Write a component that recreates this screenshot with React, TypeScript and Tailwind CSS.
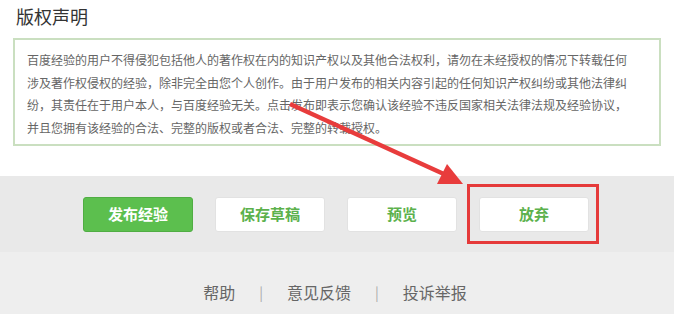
import React from 'react';

const font = { fontFamily: '"Microsoft YaHei", "Noto Sans CJK SC", "Noto Sans", sans-serif' };

export default function App() {
  return (
    <div className="relative w-[674px] h-[314px] overflow-hidden bg-[#eeeeee]" style={font}>
      {/* White section */}
      <div className="bg-white h-[176px] px-[13px] pt-[3px]">
        <h2 className="text-[18px] leading-[26px] text-[#333] pl-[3px] mb-[9px]">版权声明</h2>
        <div className="border-2 border-[#cadfc0] pl-[12px] pr-[26px] pt-[9px] pb-[5px] text-[12px] leading-[22.5px] text-[#666]">
          百度经验的用户不得侵犯包括他人的著作权在内的知识产权以及其他合法权利，请勿在未经授权的情况下转载任何涉及著作权侵权的经验，除非完全由您个人创作。由于用户发布的相关内容引起的任何知识产权纠纷或其他法律纠纷，其责任在于用户本人，与百度经验无关。点击发布即表示您确认该经验不违反国家相关法律法规及经验协议，并且您拥有该经验的合法、完整的版权或者合法、完整的转载授权。
        </div>
      </div>

      {/* Button band */}
      <div className="h-[76px] bg-[#e9e9e9] flex justify-center items-start pt-[21px] gap-[22px] pl-[1px] pr-[3px]">
        <button className="w-[110px] h-[35px] rounded-[3px] bg-[#5cbf4e] border border-[#50ad43] text-white text-[15px] font-bold">发布经验</button>
        <button className="w-[110px] h-[35px] rounded-[3px] bg-white border border-[#e2e2e2] text-[#5cb14c] text-[15px] font-bold">保存草稿</button>
        <button className="w-[110px] h-[35px] rounded-[3px] bg-white border border-[#e2e2e2] text-[#5cb14c] text-[15px] font-bold">预览</button>
        <button className="w-[110px] h-[35px] rounded-[3px] bg-white border border-[#e2e2e2] text-[#5cb14c] text-[15px] font-bold">放弃</button>
      </div>

      {/* Footer */}
      <div className="flex justify-center items-center gap-[24px] pt-[28px] pr-[4px] text-[16px] text-[#666]">
        <span>帮助</span>
        <span className="text-[#aaa] text-[14px]">|</span>
        <span>意见反馈</span>
        <span className="text-[#aaa] text-[14px]">|</span>
        <span>投诉举报</span>
      </div>

      {/* Annotation: red box */}
      <div className="absolute left-[467px] top-[184px] w-[132px] h-[60px] border-[3px] border-[#e53a3a]" />

      {/* Annotation: arrow */}
      <svg className="absolute left-0 top-0 pointer-events-none" width="674" height="314" viewBox="0 0 674 314">
        <line x1="290" y1="104" x2="446" y2="175" stroke="#e83c3c" strokeWidth="4.5" />
        <polygon points="463,184 437,184 447,164" fill="#e83c3c" />
      </svg>
    </div>
  );
}
